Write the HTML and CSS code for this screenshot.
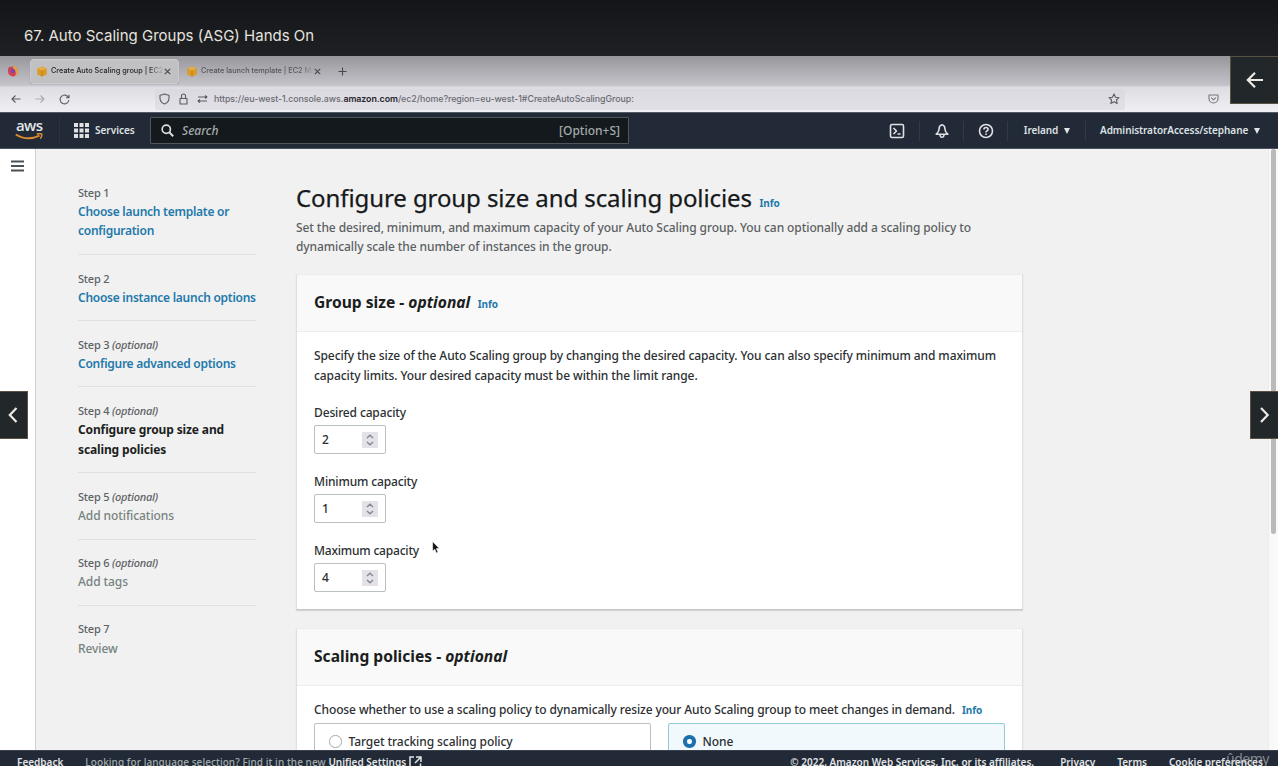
FILE: index.html
```html
<!DOCTYPE html>
<html lang="en">
<head>
<meta charset="utf-8">
<title>67. Auto Scaling Groups (ASG) Hands On</title>
<link rel="stylesheet" href="styles.css">
</head>
<body>
<div class="player">
  <header class="lecture-bar">67. Auto Scaling Groups (ASG) Hands On</header>

  <div class="browser">
    <div class="tabs">
      <svg class="firefox" width="12" height="12" viewBox="0 0 12 12"><circle cx="6" cy="6.4" r="5" fill="#d9344b"/><path d="M1 5Q1 2 3 1.500Q3 3 5 3Q8 3 7.500 6Q5 5 4.500 7Q2 8 1 5z" fill="#cf3560"/><path d="M6 .8Q11 2 11 6.500Q11 10 8 11Q10 7 7.500 5Q5.500 3.500 6 .8z" fill="#eda32c"/><circle cx="6" cy="6" r="2.200" fill="#7d3cab"/></svg>
      <div class="tab tab-active">
        <svg class="cube" width="10" height="11" viewBox="0 0 10 11"><path d="M5 .4 9.700 2.400V8.600L5 10.600.3 8.600V2.400z" fill="#d99a26"/><path d="M5 .4 9.700 2.400 5 4.400.3 2.400z" fill="#e2ad48"/><path d="M5 4.400V10.600" stroke="#b97c14" stroke-width=".8"/></svg>
        <span class="tab-text">Create Auto Scaling group | EC2</span>
        <svg class="x" width="7" height="7" viewBox="0 0 7 7"><path d="M.8.8 6.200 6.200M6.200.8.8 6.200"/></svg>
      </div>
      <div class="tab">
        <svg class="cube" width="10" height="11" viewBox="0 0 10 11"><path d="M5 .4 9.700 2.400V8.600L5 10.600.3 8.600V2.400z" fill="#d99a26"/><path d="M5 .4 9.700 2.400 5 4.400.3 2.400z" fill="#e2ad48"/><path d="M5 4.400V10.600" stroke="#b97c14" stroke-width=".8"/></svg>
        <span class="tab-text">Create launch template | EC2 Ma</span>
        <svg class="x" width="7" height="7" viewBox="0 0 7 7"><path d="M.8.8 6.200 6.200M6.200.8.8 6.200"/></svg>
      </div>
      <svg class="x plus" width="9" height="9" viewBox="0 0 9 9"><path d="M4.500.5V8.500M.5 4.500H8.500"/></svg>
    </div>
    <div class="toolbar">
      <svg class="line" width="10" height="10" viewBox="0 0 10 10"><path d="M9.500 5H1M4.500 1.500 1 5 4.500 8.500"/></svg>
      <svg class="line dim" width="10" height="10" viewBox="0 0 10 10"><path d="M.5 5H9M5.500 1.500 9 5 5.500 8.500"/></svg>
      <svg class="line" width="11" height="11" viewBox="0 0 11 11"><path d="M9.300 3.200A4.400 4.400 0 1 0 9.900 6M10 .8V3.800H7"/></svg>
      <div class="url">
        <svg class="line" width="11" height="12" viewBox="0 0 11 12"><path d="M5.500 1Q7.500 2 10 2.200V5.500Q9.600 9.500 5.500 11Q1.400 9.500 1 5.500V2.200Q3.500 2 5.500 1z"/></svg>
        <svg class="line" width="9" height="12" viewBox="0 0 9 12"><path d="M1 5.500H8V11H1zM2.500 5.500V3Q2.500 1 4.500 1T6.500 3V5.500"/></svg>
        <svg class="line" width="11" height="8" viewBox="0 0 11 8"><path d="M1 2H10M8 .5 10 2 8 3.500M10 6H1M3 4.500 1 6 3 7.500"/></svg>
        <span class="address">https://eu-west-1.console.aws.<b>amazon.com</b>/ec2/home?region=eu-west-1#CreateAutoScalingGroup:</span>
        <svg class="line star" width="12" height="12" viewBox="0 0 12 12"><path d="M6 1 7.500 4.300 11 4.700 8.400 7 9.200 10.600 6 8.800 2.800 10.600 3.600 7 1 4.700 4.500 4.300z"/></svg>
      </div>
      <svg class="line pocket" width="11" height="10" viewBox="0 0 11 10"><path d="M1 1H10V4.500A4.500 4.500 0 0 1 1 4.500zM3.200 3.700 5.500 5.800 7.800 3.700"/></svg>
    </div>
  </div>

  <nav class="aws-nav">
    <div class="aws-logo"><span>aws</span><svg width="28" height="8" viewBox="0 0 28 8"><path d="M.8 1.500Q12 8.500 24.500 2.600" fill="none" stroke="#d98b32" stroke-width="1.900"/><path d="M21.800 1Q25 .2 26.800 1.200Q27 4 25.300 5.600" fill="none" stroke="#d98b32" stroke-width="1.500"/></svg></div>
    <div class="services">
      <svg width="15" height="15" viewBox="0 0 15 15"><path d="M0 0h4v4H0zM5.500 0h4v4h-4zM11 0h4v4h-4zM0 5.500h4v4H0zM5.500 5.500h4v4h-4zM11 5.500h4v4h-4zM0 11h4v4H0zM5.500 11h4v4h-4zM11 11h4v4h-4z" fill="#dfe1e3"/></svg>
      <span>Services</span>
    </div>
    <div class="search">
      <svg width="13" height="13" viewBox="0 0 13 13"><circle cx="5.300" cy="5.300" r="4.100" fill="none" stroke="#dcdcdc" stroke-width="1.700"/><path d="M8.300 8.300 12.200 12.200" stroke="#dcdcdc" stroke-width="2"/></svg>
      <i>Search</i><span>[Option+S]</span>
    </div>
    <div class="nav-right">
      <div class="nav-cell shell"><svg width="16" height="16" viewBox="0 0 16 16"><rect x="1.500" y="1.500" width="13" height="13" rx="1.500"/><path d="M4.500 5 7.500 8 4.500 11M8.500 11H11.500"/></svg></div>
      <div class="nav-cell"><svg width="16" height="16" viewBox="0 0 16 16"><path d="M8 1.800Q11 2.500 11 6.500 11.200 8.800 13.800 11.200H2.200Q4.800 8.800 5 6.500 5 2.500 8 1.800zM6 12Q6.300 14.300 8 14.300T10 12"/></svg></div>
      <div class="nav-cell"><svg width="16" height="16" viewBox="0 0 16 16"><circle cx="8" cy="8" r="6.500"/><path d="M5.900 6.500Q6 4.500 8 4.500T10.100 6.400Q10 7.600 8.600 8.200 8 8.500 8 9.500M8 10.600V12"/></svg></div>
      <div class="nav-cell region">Ireland<em class="caret"></em></div>
      <div class="nav-cell account">AdministratorAccess/stephane<em class="caret"></em></div>
    </div>
  </nav>

  <div class="console">
    <aside class="rail"><svg width="13" height="12" viewBox="0 0 13 12"><path d="M0 1.500H13M0 6H13M0 10.500H13" stroke="#4b5154" stroke-width="1.900"/></svg></aside>
    <ol class="steps">
      <li><p>Step 1</p><a>Choose launch template or<br>configuration</a></li>
      <li><p>Step 2</p><a>Choose instance launch options</a></li>
      <li><p>Step 3 <i>(optional)</i></p><a>Configure advanced options</a></li>
      <li><p>Step 4 <i>(optional)</i></p><strong>Configure group size and<br>scaling policies</strong></li>
      <li><p>Step 5 <i>(optional)</i></p><span>Add notifications</span></li>
      <li><p>Step 6 <i>(optional)</i></p><span>Add tags</span></li>
      <li><p>Step 7</p><span>Review</span></li>
    </ol>
    <main class="content">
      <h1>Configure group size and scaling policies<a class="info">Info</a></h1>
      <p class="lead">Set the desired, minimum, and maximum capacity of your Auto Scaling group. You can optionally add a scaling policy to<br>dynamically scale the number of instances in the group.</p>

      <section class="card">
        <h2>Group size - <i>optional</i><a class="info">Info</a></h2>
        <div class="card-body">
          <p>Specify the size of the Auto Scaling group by changing the desired capacity. You can also specify minimum and maximum<br>capacity limits. Your desired capacity must be within the limit range.</p>
          <div class="field"><label>Desired capacity</label><div class="number">2<svg width="16" height="16" viewBox="0 0 16 16"><path d="M5 6 8 3.200 11 6M5 10 8 12.800 11 10"/></svg></div></div>
          <div class="field"><label>Minimum capacity</label><div class="number">1<svg width="16" height="16" viewBox="0 0 16 16"><path d="M5 6 8 3.200 11 6M5 10 8 12.800 11 10"/></svg></div></div>
          <div class="field"><label class="tight">Maximum capacity</label><div class="number">4<svg width="16" height="16" viewBox="0 0 16 16"><path d="M5 6 8 3.200 11 6M5 10 8 12.800 11 10"/></svg></div></div>
        </div>
      </section>

      <section class="card">
        <h2>Scaling policies - <i>optional</i></h2>
        <div class="card-body">
          <p class="question">Choose whether to use a scaling policy to dynamically resize your Auto Scaling group to meet changes in demand.<a class="info">Info</a></p>
          <div class="tiles">
            <div class="tile"><em class="radio"></em>Target tracking scaling policy</div>
            <div class="tile selected"><em class="radio"></em>None</div>
          </div>
        </div>
      </section>
    </main>
    <div class="scroll"><div class="thumb"></div></div>
  </div>

  <footer class="aws-footer">
    <b>Feedback</b>
    <span class="lang">Looking for language selection? Find it in the new <b>Unified Settings</b><svg width="13" height="12" viewBox="0 0 13 12"><path d="M5 1H1V11H11.500V7.500M7 1H12V6M12 1 6 7"/></svg></span>
    <b class="copy">© 2022, Amazon Web Services, Inc. or its affiliates.</b>
    <b class="privacy">Privacy</b>
    <b class="terms">Terms</b>
    <b>Cookie preferences</b>
  </footer>

  <button class="overlay back"><svg width="18" height="18" viewBox="0 0 18 18"><path d="M17 9H2M9 1.800 1.800 9 9 16.200"/></svg></button>
  <button class="overlay prev"><svg width="10" height="18" viewBox="0 0 10 18"><path d="M8.500 2 1.800 9 8.500 16"/></svg></button>
  <button class="overlay next"><svg width="10" height="18" viewBox="0 0 10 18"><path d="M1 2 7.700 9 1 16"/></svg></button>
  <div class="watermark">ûdemy</div>
  <svg class="cursor" width="8" height="13" viewBox="0 0 8 13"><path d="M.6.6V10L2.800 8.200 4.300 12 6 11.300 4.400 7.600H7.300z" fill="#111" stroke="#fff" stroke-width=".6"/></svg>
</div>
</body>
</html>
```
FILE: styles.css
```css
* { box-sizing: border-box; }
body { margin: 0; overflow: hidden; font: 500 12px/19.5px "Noto Sans", sans-serif; color: #2b2f32; }
h1, h2, p, ol { margin: 0; padding: 0; }
svg { display: block; flex: none; }
.player { position: relative; display: flex; flex-direction: column; width: 1278px; height: 766px; overflow: hidden; white-space: nowrap; }

.lecture-bar { flex: none; height: 56px; padding: 16px 0 0 24px; background: linear-gradient(#131519, #1e2024); color: #e6e3df; font: 400 15px/40px Inter, sans-serif; }

.browser { flex: none; height: 56px; background: linear-gradient(#96969b, #c4c3c9 52%, #dedde2 56%, #f0eff3); font-family: Inter, sans-serif; }
.tabs { display: flex; align-items: center; height: 30px; }
.firefox { margin: 0 11px 0 7px; opacity: .9; }
.tab { display: flex; align-items: center; width: 149px; height: 25px; padding: 0 7px; margin-right: 1px; font-size: 7.3px; color: #56565b; font-weight: 500; }
.tab-active { background: #c1c0c2; border: 1px solid #ccccd0; border-radius: 3px; box-shadow: 0 0 1px #77777c; color: #242428; padding: 0 6px; }
.cube { margin-right: 4px; }
.tab-text { width: 113px; overflow: hidden; -webkit-mask-image: linear-gradient(90deg, #000 86%, transparent); mask-image: linear-gradient(90deg, #000 86%, transparent); }
.x { fill: none; stroke: #46464b; stroke-width: 1.1; }
.plus { margin-left: 8px; }
.toolbar { display: flex; align-items: center; height: 26px; padding-left: 11px; gap: 14px; }
.line { fill: none; stroke: #5c5c62; stroke-width: 1.1; stroke-linejoin: round; }
.dim { stroke: #a9a9af; }
.url { display: flex; align-items: center; width: 970px; height: 21px; margin-left: 71px; padding: 0 5px 0 4px; gap: 9px; background: rgba(214, 211, 221, .5); border-radius: 3px; font-size: 8.85px; letter-spacing: -.055px; color: #6b6b72; }
.address { flex: 1; margin-left: -3px; }
.address b { font-weight: 600; color: #25252a; }
.pocket { margin-left: 69px; stroke: #77777c; }

.aws-nav { flex: none; display: flex; align-items: center; height: 37px; background: #222a37; border-top: 1px solid #545b67; border-bottom: 1px solid #4a525e; color: #dee1e4; font-size: 10px; font-weight: 600; }
.aws-logo { width: 60px; height: 26px; padding-left: 15px; border-right: 1px solid #2b3340; }
.aws-logo span { display: block; height: 14px; padding-left: 1px; font: 600 15px/14px "Open Sans", sans-serif; letter-spacing: -.6px; color: #e3e5e7; }
.aws-logo svg { margin-top: 1px; }
.services { display: flex; align-items: center; width: 90px; padding-left: 14px; gap: 6px; }
.search { display: flex; align-items: center; width: 479px; height: 27px; padding: 0 8px 0 10px; gap: 8px; background: #14191d; border: 1px solid #4f565c; border-radius: 1px; color: #a3abab; font-size: 12px; font-weight: 500; }
.search i { flex: 1; }
.nav-right { display: flex; margin-left: auto; align-items: center; }
.nav-cell { display: flex; align-items: center; justify-content: center; width: 44px; height: 20px; border-left: 1px solid #323a47; }
.nav-cell svg { fill: none; stroke: #dfe1e4; stroke-width: 1.6; stroke-linejoin: round; }
.shell { border-left: 0; }
.caret { margin-left: 6px; border: 3.5px solid transparent; border-top: 6px solid #e2e4e6; border-bottom: 0; }
.region { width: 78px; padding: 0 0 0 1px; letter-spacing: -.1px; }
.account { width: 193px; justify-content: flex-start; padding-left: 14px; letter-spacing: -.07px; }

.console { flex: 1; min-height: 0; display: flex; overflow: hidden; background: #f1f1f1; }
.rail { flex: none; width: 36px; padding: 11px 0 0 11px; background: #fff; border-right: 1px solid #ccd3d3; }
.steps { flex: none; width: 178px; margin-left: 42px; padding-top: 34.7px; list-style: none; }
.steps li { padding-bottom: 12.8px; margin-bottom: 14.7px; border-bottom: 1.2px solid #dfe0e0; }
.steps li:last-child { border: 0; }
.steps p { height: 18.2px; font-size: 11px; line-height: 18px; color: #5d6265; letter-spacing: -.22px; }
.steps a, .steps strong, .steps span { display: block; line-height: 19.6px; }
.steps a { color: #2379ab; font-weight: 600; letter-spacing: -.26px; }
.steps strong { color: #1c1f21; font-weight: 700; letter-spacing: -.13px; }
.steps span { color: #76837f; letter-spacing: -.08px; }

.content { flex: none; width: 727px; margin-left: 40px; padding-top: 32px; }
h1 { height: 36.5px; font-size: 24px; line-height: 33px; font-weight: 400; letter-spacing: -.085px; color: #16191b; -webkit-text-stroke: .25px #16191b; }
.info { margin-left: 7.5px; font: 700 10px/16px "Noto Sans", sans-serif; letter-spacing: -.12px; color: #2379ab; -webkit-text-stroke: 0; }
.lead { height: 56.5px; color: #5b5f62; letter-spacing: -.084px; }
.card { width: 727px; margin-bottom: 18px; background: #fff; border: 1px solid #dfe0e0; border-top-color: #ececec; border-bottom-color: #c4c6c6; box-shadow: 0 1px 1px #d4d6d6; }
h2 { height: 57px; padding-left: 17px; background: #f9f9f9; border-bottom: 1px solid #ececec; font-size: 15.6px; line-height: 54px; font-weight: 700; color: #1b1e20; }
.card-body { padding: 14px 17px 17px; letter-spacing: -.093px; }
.field { margin-top: 13px; height: 56.2px; }
.field label { display: block; height: 26px; line-height: 31px; letter-spacing: -.14px; }
.field label.tight { letter-spacing: -.2px; }
.card-body > p + .field { margin-top: 12px; }
.field .number { display: flex; align-items: center; justify-content: space-between; width: 72px; height: 29px; margin-top: 2px; padding: 0 7px; border: 1.5px solid #b8bfbf; border-radius: 2px; background: #fff; }
.number svg { background: #e4e2e8; fill: none; stroke: #87868d; stroke-width: 1.4; }
.question { height: 23px; letter-spacing: -.11px; }
.question .info { margin-left: 7px; }
.tiles { display: flex; gap: 17px; }
.tile { display: flex; align-items: center; width: 337px; height: 72px; padding: 0 0 34px 14px; border: 1px solid #b8bfbf; border-radius: 2px; letter-spacing: -.08px; }
.selected { background: #f1f9fc; border-color: #8fcbd8; }
.radio { width: 12.500px; height: 12.500px; margin-right: 7px; border: 1px solid #a3abab; border-radius: 50%; background: #fff; }
.selected .radio { border: 4px solid #1c70ab; }

.scroll { flex: none; width: 10px; margin-left: auto; padding-left: 2px; background: #f9f9f9; border-left: 1px solid #ececec; }
.thumb { width: 5px; height: 385px; border-radius: 3px; background: #b9b9b9; }

.aws-footer { flex: none; display: flex; height: 16px; padding: 2px 0 0 17px; background: #212a36; border-top: 1px solid #39414c; color: #e3e5e7; font-size: 10px; line-height: 18px; overflow: hidden; }
.aws-footer b { font-weight: 600; color: #e3e5e7; }
.lang { display: flex; width: 705px; margin-left: 22px; color: #a3abae; letter-spacing: .07px; white-space: pre; }
.lang b { letter-spacing: 0; }
.lang svg { margin: 3px 0 0 3px; fill: none; stroke: #e3e5e7; stroke-width: 1.500; }
.privacy { margin-left: 26px; }
.terms { margin: 0 22px; }

.overlay { position: absolute; display: flex; align-items: center; justify-content: center; width: 28px; height: 48px; padding: 0; background: #22272a; border: 1px solid #5b5142; }
.overlay svg { fill: none; stroke: #edeae5; stroke-width: 2.2; }
.back { top: 56px; right: 0; width: 48px; border-right: 0; }
.prev { top: 391px; left: 0; border-left: 0; padding-right: 2px; }
.next { top: 391px; right: 0; border-right: 0; }
.watermark { position: absolute; left: 1226px; top: 750px; color: rgba(205, 207, 210, .6); font: 400 14px/18px "Noto Sans", sans-serif; letter-spacing: -.5px; }
.cursor { position: absolute; left: 432px; top: 541px; }
```
